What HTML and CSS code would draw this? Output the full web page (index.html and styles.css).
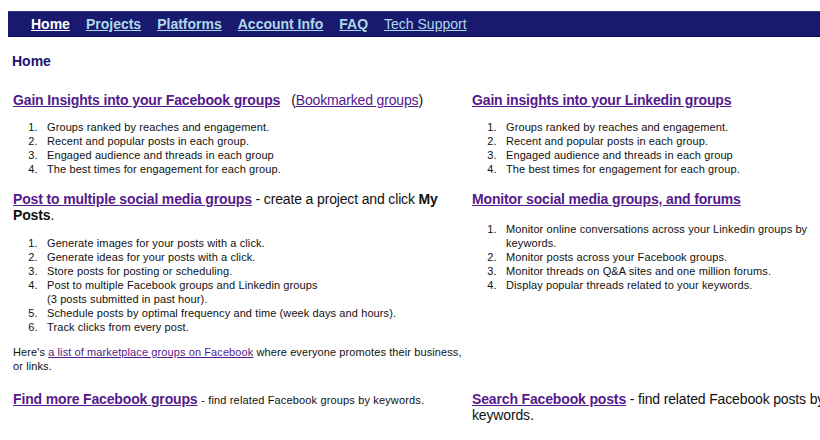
FILE: index.html
```html
<!DOCTYPE html>
<html>
<head>
<meta charset="utf-8">
<title>Home</title>
<link rel="stylesheet" href="styles.css">
</head>
<body>
<nav class="topnav">
  <a class="nav-link current" href="#">Home</a>
  <a class="nav-link" href="#">Projects</a>
  <a class="nav-link" href="#">Platforms</a>
  <a class="nav-link" href="#">Account Info</a>
  <a class="nav-link" href="#">FAQ</a>
  <a class="nav-link plain" href="#">Tech Support</a>
</nav>
<div class="page-title">Home</div>
<div class="grid">
  <div class="cell r1">
    <div class="head"><a class="hlink" href="#">Gain Insights into your Facebook groups</a><span class="aside">(<a class="slink" href="#">Bookmarked groups</a>)</span></div>
    <ol class="list">
      <li>Groups ranked by reaches and engagement.</li>
      <li>Recent and popular posts in each group.</li>
      <li>Engaged audience and threads in each group</li>
      <li>The best times for engagement for each group.</li>
    </ol>
  </div>
  <div class="cell r1">
    <div class="head"><a class="hlink" href="#">Gain insights into your Linkedin groups</a></div>
    <ol class="list">
      <li>Groups ranked by reaches and engagement.</li>
      <li>Recent and popular posts in each group.</li>
      <li>Engaged audience and threads in each group</li>
      <li>The best times for engagement for each group.</li>
    </ol>
  </div>
  <div class="cell r2">
    <div class="head"><a class="hlink" href="#">Post to multiple social media groups</a> - create a project and click <b>My Posts</b>.</div>
    <ol class="list l2">
      <li>Generate images for your posts with a click.</li>
      <li>Generate ideas for your posts with a click.</li>
      <li>Store posts for posting or scheduling.</li>
      <li>Post to multiple Facebook groups and Linkedin groups<br>(3 posts submitted in past hour).</li>
      <li>Schedule posts by optimal frequency and time (week days and hours).</li>
      <li>Track clicks from every post.</li>
    </ol>
    <p class="note">Here's <a class="tlink" href="#">a list of marketplace groups on Facebook</a> where everyone promotes their business, or links.</p>
  </div>
  <div class="cell r2">
    <div class="head"><a class="hlink" href="#">Monitor social media groups, and forums</a></div>
    <ol class="list l3">
      <li>Monitor online conversations across your Linkedin groups by keywords.</li>
      <li>Monitor posts across your Facebook groups.</li>
      <li>Monitor threads on Q&amp;A sites and one million forums.</li>
      <li>Display popular threads related to your keywords.</li>
    </ol>
  </div>
  <div class="cell r3">
    <div class="head"><a class="hlink" href="#">Find more Facebook groups</a> <span class="small">- find related Facebook groups by keywords.</span></div>
  </div>
  <div class="cell r3">
    <div class="head"><a class="hlink" href="#">Search Facebook posts</a> - find related Facebook posts by keywords.</div>
  </div>
</div>
</body>
</html>
```

FILE: styles.css
```css
html, body {
  overflow: hidden;
}
body {
  margin: 11px 0 0 8px;
  font-family: "Liberation Sans", Arial, sans-serif;
  color: #111;
  background: #fff;
  width: 900px;
}
.topnav {
  display: flex;
  align-items: center;
  gap: 16px;
  height: 26px;
  padding-left: 23px;
  background: #191970;
  border-top: 1px solid #3a3a80;
  border-bottom: 1px solid #0c0c5a;
  box-sizing: border-box;
}
.nav-link {
  font-size: 14px;
  font-weight: bold;
  color: #add8e6;
  text-decoration: underline;
  line-height: 16px;
}
.nav-link.current {
  color: #fff;
}
.nav-link.plain {
  font-weight: normal;
}
.page-title {
  margin: 16px 0 0 4px;
  font-size: 14px;
  line-height: 16px;
  font-weight: bold;
  color: #1a1270;
}
.grid {
  display: grid;
  grid-template-columns: 452px 375px;
  column-gap: 7px;
  padding-left: 5px;
  margin-top: 23px;
}
.cell.r2 {
  margin-top: 15px;
}
.cell.r3 {
  margin-top: 18px;
}
.head {
  font-size: 14px;
  line-height: 16px;
  letter-spacing: -0.15px;
}
.hlink {
  font-weight: bold;
  color: #551a8b;
  text-decoration: underline;
}
.aside {
  margin-left: 11px;
}
.slink, .tlink {
  color: #551a8b;
}
.list {
  margin: 12px 0 0;
  padding-left: 34px;
  font-size: 11px;
  line-height: 14px;
  letter-spacing: 0.1px;
}
.list li::marker {
  content: counter(list-item) ".\00a0\00a0\00a0";
}
.list.l2 {
  margin-top: 13px;
}
.list.l3 {
  margin-top: 15px;
}
.note {
  margin: 11px 0 0;
  font-size: 11px;
  line-height: 14px;
  letter-spacing: 0.1px;
}
.small {
  font-size: 11px;
  letter-spacing: 0.15px;
}
```
